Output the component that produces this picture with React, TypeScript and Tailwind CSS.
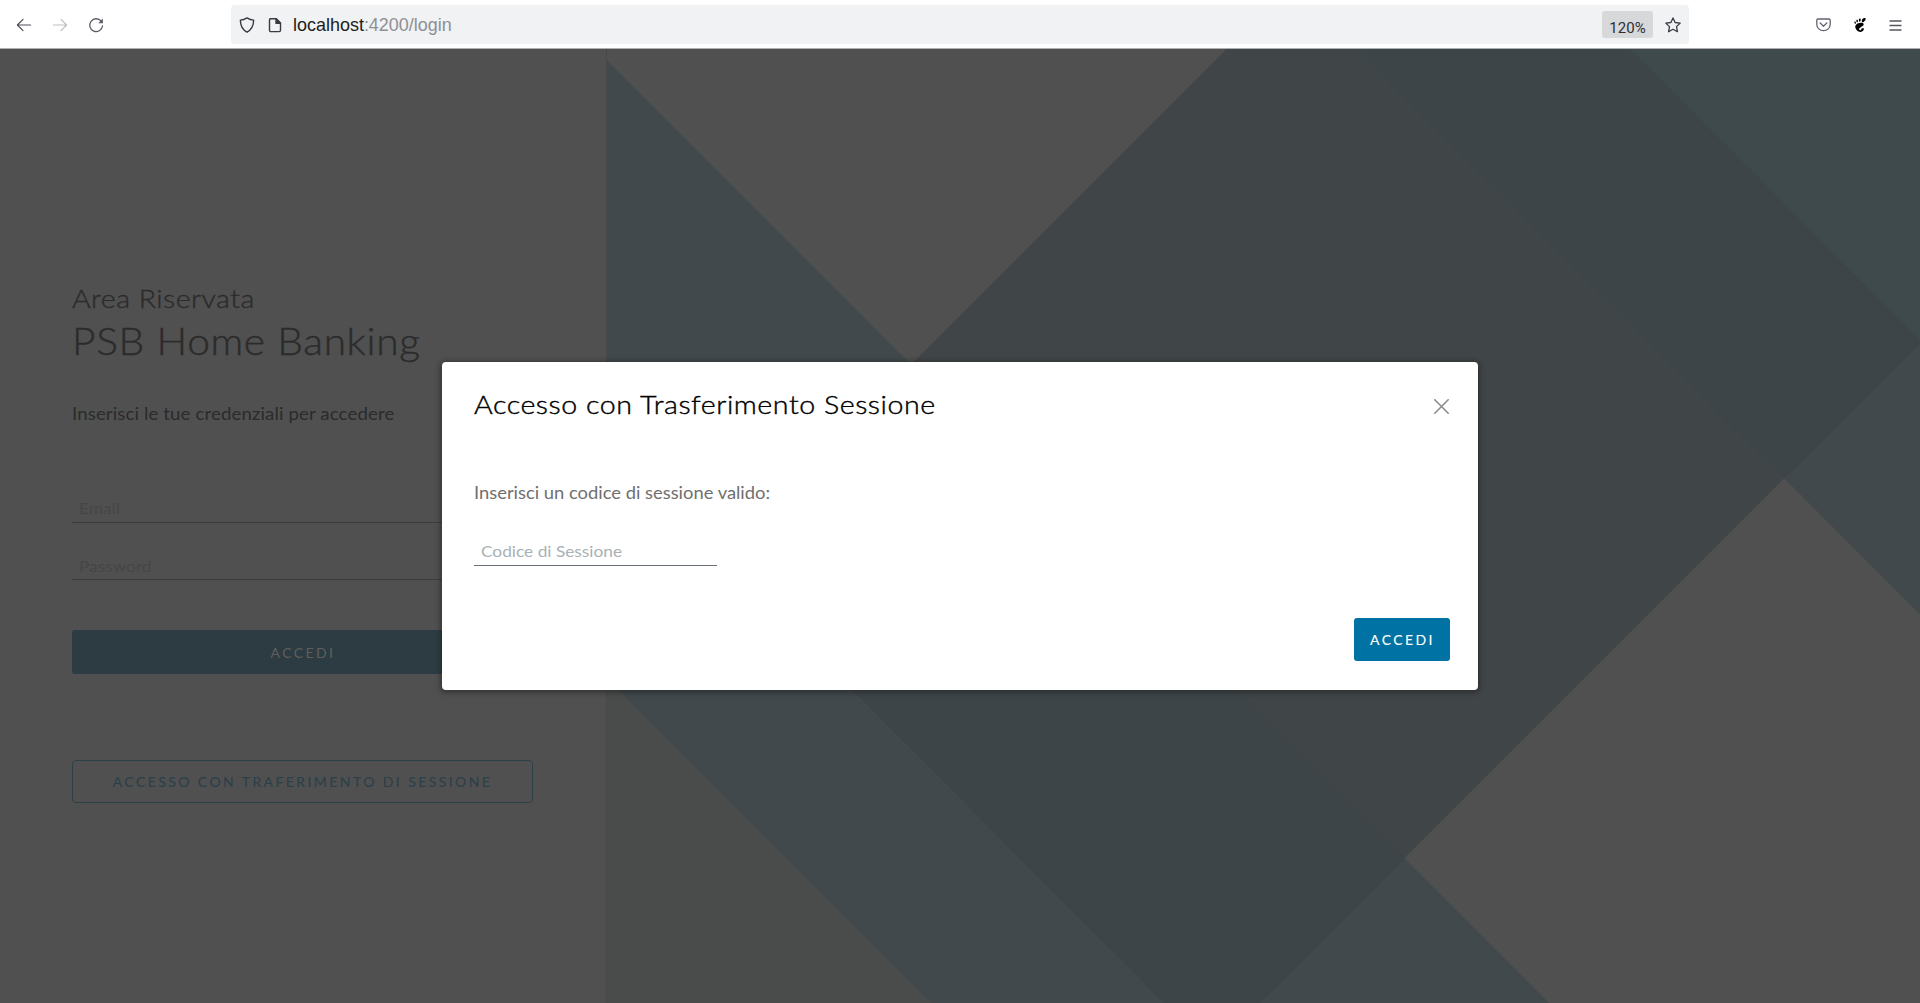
import { SiGnome } from "react-icons/si";

function BrowserBar() {
  return (
    <header className="flex h-12 shrink-0 items-center bg-white text-[#5b5b66]">
      <div className="flex w-[231px] shrink-0 items-center gap-5 pl-4 pt-0.5">
        <svg className="size-4" viewBox="0 0 16 16" fill="none" stroke="#4f4f58" strokeWidth="1.2" strokeLinecap="round" strokeLinejoin="round">
          <path d="M14.6 8H1.6M7 2.4 1.4 8 7 13.6" />
        </svg>
        <svg className="size-4" viewBox="0 0 16 16" fill="none" stroke="#bfbfc2" strokeWidth="1.2" strokeLinecap="round" strokeLinejoin="round">
          <path d="M1.4 8h13M9 2.4 14.6 8 9 13.6" />
        </svg>
        <svg className="size-4" viewBox="0 0 16 16" fill="none" stroke="#5b5b66" strokeWidth="1.3" strokeLinecap="round">
          <path d="M13.2 4.2A6.4 6.4 0 1 0 14.5 9" />
          <path d="M14.9 1.6v4.6h-4.6z" fill="#5b5b66" stroke="none" />
        </svg>
      </div>
      <div className="mt-px flex h-[39px] w-[1458px] shrink-0 items-center rounded bg-[#f0f2f4]">
        <svg className="ml-2 mt-px size-4" viewBox="0 0 16 16" fill="none" stroke="#3a3a42" strokeWidth="1.4" strokeLinejoin="round">
          <path d="M8 .9c2 1.3 4.2 2.1 6.6 2.2.1 4.800-1.700 9.300-6.600 12.100C3.100 12.400 1.300 7.900 1.400 3.100 3.800 3 6 2.200 8 .9z" />
        </svg>
        <svg className="ml-3 mt-px size-4" viewBox="0 0 16 16" fill="none" stroke="#3a3a42" strokeWidth="1.4" strokeLinejoin="round">
          <path d="M3.500 1.700h5.800l4.200 4.200v7.400a1.300 1.300 0 0 1-1.300 1.300H3.800a1.300 1.300 0 0 1-1.300-1.300V2.900a1.200 1.200 0 0 1 1-1.200z" />
          <path d="M9 1.700v4.500h4.500z" fill="#3a3a42" />
        </svg>
        <div className="ml-2.5 origin-left scale-x-[0.945] whitespace-nowrap font-['Liberation_Sans',sans-serif] text-[19px] leading-6 text-[#8f8f94]">
          <span className="text-[#1c1c20]">localhost</span>:4200/login
        </div>
        <div className="ml-auto mr-3 flex h-[27px] w-[51px] items-center justify-center rounded-[3px] bg-[#d7d8da] pt-[6px] font-[Roboto,sans-serif] text-[15px] leading-5 text-[#2e2e34]">
          120%
        </div>
        <svg className="mr-2 mt-px size-4" viewBox="0 0 16 16" fill="none" stroke="#3a3a42" strokeWidth="1.3" strokeLinejoin="round">
          <path d="m8 .9 2.100 4.600 5.100.6-3.700 3.500.9 5.100L8 12.300l-4.400 2.400.9-5.100L.8 6.100l5.100-.6z" />
        </svg>
      </div>
      <div className="ml-auto flex items-center gap-[22px] pr-[18px] pt-0.5">
        <svg className="h-[14px] w-[15px]" viewBox="0 0 15 14" fill="none" stroke="#63636d" strokeWidth="1.3" strokeLinecap="round" strokeLinejoin="round">
          <path d="M2 1h11a1.200 1.200 0 0 1 1.200 1.200v4.200a6.700 6.300 0 0 1-13.400 0V2.200A1.200 1.200 0 0 1 2 1z" />
          <path d="m4.200 5 3.300 3.200L10.800 5" />
        </svg>
        <SiGnome className="size-[14px] text-black" />
        <svg className="h-[11px] w-[13px]" viewBox="0 0 13 11" stroke="#55555f" strokeWidth="1.3">
          <path d="M.5 1h12M.5 5.500h12M.5 10h12" />
        </svg>
      </div>
    </header>
  );
}

/* Decorative diagonal bands, drawn in page coordinates (x from 606, y from 49). */
function Backdrop() {
  return (
    <svg className="h-[954px] w-[1314px] shrink-0" viewBox="606 49 1314 954">
      <rect x="606" y="49" width="1314" height="954" fill="#505050" />
      <polygon points="606,677.500 931.500,1003 606,1003" fill="#4a4c4b" />
      <polygon points="606,59.500 1549,1003 931.500,1003 606,677.500" fill="#41494c" />
      <polygon points="1356,49 1920,49 1920,614.500 1784.500,478.500" fill="#41494c" />
      <polygon points="1630,49 1920,49 1920,341" fill="#3f4a4c" />
      <polygon points="1226.500,49 1630,49 1921,341.500 1259.500,1003 1164.500,1003 719,556.500" fill="#404547" />
      <polygon points="1356,49 1630,49 1921,341.500 1784.500,478.500" fill="#3d4548" />
      <polygon points="911,364.500 1404.500,858.500 1259.500,1003 1164.500,1003 719,556.500" fill="#3d4548" />
      <rect x="606" y="49" width="1" height="954" fill="#484848" />
    </svg>
  );
}

function LoginPanel() {
  return (
    <section className="flex w-[606px] shrink-0 flex-col bg-[#505050] pl-[72px] pr-[73px] pt-[234px] font-[Lato,sans-serif] text-[#2b2b2b]">
      <div className="origin-left scale-x-110 text-[26px] font-light leading-[30px] tracking-[0.4px] [-webkit-text-stroke:0.35px]">Area Riservata</div>
      <h1 className="mt-[6px] origin-left scale-x-110 whitespace-nowrap text-[37px] font-light leading-[44px] tracking-[0.55px] [-webkit-text-stroke:0.35px]">
        PSB Home Banking
      </h1>
      <p className="mt-[41px] origin-left scale-x-110 whitespace-nowrap text-[17px] leading-5 tracking-[0.08px]">
        Inserisci le tue credenziali per accedere
      </p>
      <div className="mt-[64px] flex h-[35px] items-center border-b border-[#3a3c3e] px-[7px] pt-[5px] text-[16px] text-[#454646]">
        <span className="origin-left scale-x-[1.08]">Email</span>
      </div>
      <div className="mt-[22px] flex h-[35px] items-center border-b border-[#3a3c3e] px-[7px] pt-[7px] text-[16px] text-[#454646]">
        <span className="origin-left scale-x-[1.08]">Password</span>
      </div>
      <div className="mt-[50px] flex h-[44px] items-center justify-center rounded-[3px] bg-[#2d3c43] pl-px text-[14px] tracking-[2.4px] text-[#5f5f5d]">ACCEDI</div>
      <div className="mt-[86px] flex h-[43px] items-center justify-center whitespace-nowrap rounded-[4px] border border-[#2c404a] text-[14px] tracking-[2.42px] text-[#2c404a] [-webkit-text-stroke:0.1px]">
        ACCESSO CON TRAFERIMENTO DI SESSIONE
      </div>
    </section>
  );
}

function SessionModal() {
  return (
    <div className="flex h-[328px] w-[1036px] flex-col rounded-[4px] bg-white pl-8 pr-7 font-[Lato,sans-serif] shadow-[0_1px_5px_2px_rgba(30,30,30,0.5)]">
      <div className="mt-[26px] flex items-center justify-between">
        <h2 className="origin-left scale-x-110 text-[26px] font-light leading-8 tracking-[0.49px] text-black [-webkit-text-stroke:0.4px]">
          Accesso con Trasferimento Sessione
        </h2>
        <svg className="mt-[5px] size-[17px]" viewBox="0 0 17 17" fill="none" stroke="#8c8c8c" strokeWidth="1.600" strokeLinecap="round">
          <path d="m1.800 1.800 13.400 13.400M15.200 1.800 1.800 15.200" />
        </svg>
      </div>
      <p className="mt-[63px] origin-left scale-x-[1.08] text-[17px] leading-5 text-[#6f6f6f]">Inserisci un codice di sessione valido:</p>
      <div className="mt-[27px] flex h-[36px] w-[243px] items-center border-b border-[#6a707a] px-[7px] pt-[7px] text-[16px] text-[#a9b2b6]">
        <span className="origin-left scale-x-[1.08]">Codice di Sessione</span>
      </div>
      <button className="mt-[52px] flex h-[43px] w-24 items-center justify-center self-end rounded-[3px] bg-[#0072a3] pl-px text-[14px] tracking-[2.4px] text-white [-webkit-text-stroke:0.1px]">
        ACCEDI
      </button>
    </div>
  );
}

export default function App() {
  return (
    <div className="flex h-[1003px] w-[1920px] flex-col overflow-hidden bg-white">
      <BrowserBar />
      <main className="relative flex h-[955px] shrink-0 border-t border-[#aeb0b0]">
        <LoginPanel />
        <Backdrop />
        <div className="absolute inset-0 flex items-center justify-center">
          <SessionModal />
        </div>
      </main>
    </div>
  );
}
